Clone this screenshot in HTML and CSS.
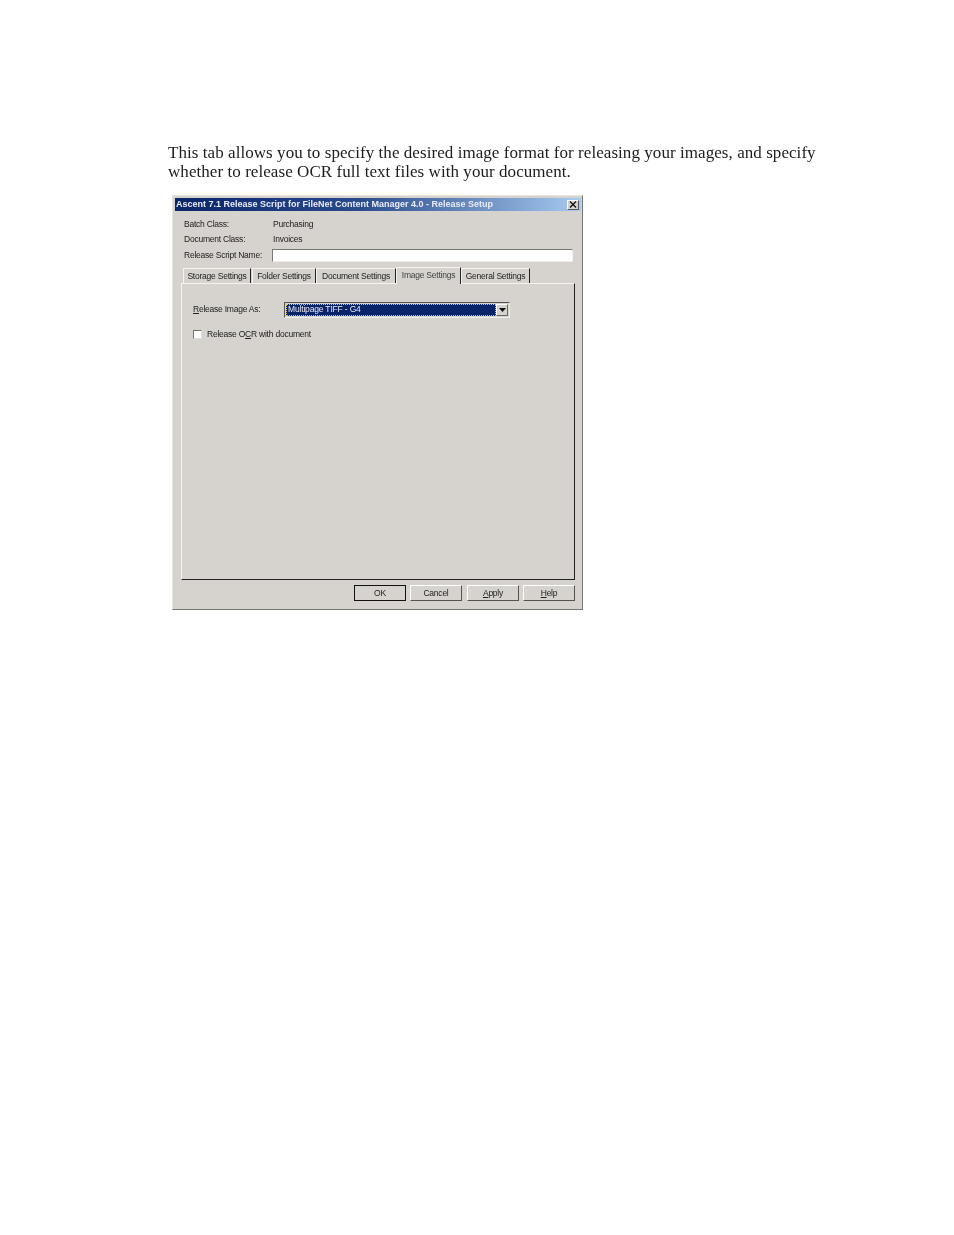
FILE: index.html
```html
<!DOCTYPE html>
<html lang="en">
<head>
<meta charset="utf-8">
<title>Release Setup</title>
<link rel="stylesheet" href="styles.css">
</head>
<body>
<main class="page">
  <p class="intro">This tab allows you to specify the desired image format for releasing your images, and specify<br>whether to release OCR full text files with your document.</p>
  <section class="dialog">
    <header class="titlebar">
      <span class="title">Ascent 7.1 Release Script for FileNet Content Manager 4.0 - Release Setup</span>
      <span class="close"><svg width="8" height="7" viewBox="0 0 8 7"><path d="M1 .5l6 6M7 .5l-6 6" stroke="#111" stroke-width="1.300" fill="none"/></svg></span>
    </header>
    <div class="info">
      <div class="row row-a"><span class="key">Batch Class:</span><span>Purchasing</span></div>
      <div class="row row-b"><span class="key">Document Class:</span><span>Invoices</span></div>
      <div class="row row-c"><span class="key key-field">Release Script Name:</span><span class="field"></span></div>
    </div>
    <nav class="tabs">
      <span class="tab t1">Storage Settings</span>
      <span class="tab t2">Folder Settings</span>
      <span class="tab t3">Document Settings</span>
      <span class="tab t4 active">Image Settings</span>
      <span class="tab t5">General Settings</span>
    </nav>
    <div class="panel">
      <div class="format">
        <label class="format-label"><u>R</u>elease Image As:</label>
        <div class="select">
          <span class="value"><span class="value-text">Multipage TIFF - G4</span></span>
          <span class="arrow"><svg width="7" height="4" viewBox="0 0 7 4"><path d="M0 0h7L3.500 4z" fill="#111"/></svg></span>
        </div>
      </div>
      <div class="check"><span class="box"></span><span>Release O<u>C</u>R with document</span></div>
    </div>
    <footer class="buttons">
      <span class="btn default">OK</span>
      <span class="btn">Cancel</span>
      <span class="btn btn-apply"><u>A</u>pply</span>
      <span class="btn"><u>H</u>elp</span>
    </footer>
  </section>
</main>
</body>
</html>
```
FILE: styles.css
```css
html, body { margin: 0; padding: 0; background: #fff; }
body { width: 954px; height: 1235px; overflow: hidden; }
.page { padding: 143px 0 0 168px; }
.intro {
  margin: 0;
  width: 700px;
  font: 17px/19px "Liberation Serif", serif;
  color: #1c1c1c;
  letter-spacing: 0.06px;
  filter: blur(0.2px);
}
.dialog {
  box-sizing: border-box;
  width: 411px;
  height: 415px;
  margin: 14px 0 0 4px;
  padding: 2px 1px 0 2px;
  background: #d6d3ce;
  border: 1px solid #77756f;
  border-top-color: #e8e6e1;
  border-left-color: #e8e6e1;
  font: 8.500px/11px "Liberation Sans", sans-serif;
  letter-spacing: -0.23px;
  color: #222;
  display: flex;
  flex-direction: column;
  filter: blur(0.3px);
}
.titlebar {
  height: 13px;
  flex: none;
  display: flex;
  align-items: center;
  justify-content: space-between;
  padding: 0 2px 0 1px;
  background: linear-gradient(90deg, #0a246a 0%, #2a4a8c 45%, #a6caf0 100%);
}
.title { color: #e8ecf4; font-weight: bold; font-size: 9px; letter-spacing: 0; white-space: nowrap; }
.close {
  box-sizing: border-box;
  width: 12px;
  height: 10px;
  display: flex;
  align-items: center;
  justify-content: center;
  background: #d6d3ce;
  border: 1px solid #555;
  border-top-color: #fff;
  border-left-color: #fff;
}
.info { padding: 6px 8px 0 9px; flex: none; }
.row { display: flex; align-items: center; }
.key { width: 89px; flex: none; }
.key-field { width: 88px; }
.row-a { height: 15px; }
.row-b { height: 15px; }
.row-c { height: 16px; }
.field {
  box-sizing: border-box;
  width: 301px;
  height: 13px;
  background: #fff;
  border: 1px solid #eee;
  border-top-color: #77756f;
  border-left-color: #77756f;
}
.tabs { display: flex; align-items: flex-end; height: 20px; flex: none; padding-left: 8px; }
.tab {
  box-sizing: border-box;
  height: 15px;
  padding-top: 2px;
  text-align: center;
  white-space: nowrap;
  border-top: 1px solid #f4f3f0;
  border-left: 1px solid #f4f3f0;
  border-right: 1px solid #222;
}
.t1 { width: 68px; }
.t2 { width: 64px; margin-left: 1px; }
.t3 { width: 80px; }
.t4 { width: 65px; }
.t5 { width: 69px; }
.active { height: 17px; padding-top: 2px; background: #d6d3ce; position: relative; z-index: 1; margin-bottom: -1px; color: #444; }
.panel {
  box-sizing: border-box;
  width: 394px;
  height: 297px;
  flex: none;
  margin-left: 6px;
  padding: 17px 0 0 11px;
  border: 1px solid #f4f3f0;
  border-right: 1.500px solid #222;
  border-bottom: 1.500px solid #222;
}
.format { display: flex; align-items: center; height: 17px; }
.format-label { width: 91px; flex: none; }
.select {
  box-sizing: border-box;
  width: 226px;
  height: 16px;
  display: flex;
  padding: 1px;
  border: 1px solid #555;
  border-right-color: #eee;
  border-bottom-color: #eee;
  background: #d6d3ce;
}
.value {
  flex: 1;
  background: #0a246a;
  outline: 1px dotted #d9c46c;
  outline-offset: -1px;
  display: flex;
  align-items: center;
  padding-left: 2px;
}
.value-text { color: #e6e8f2; letter-spacing: -0.17px; }
.arrow {
  box-sizing: border-box;
  width: 12px;
  flex: none;
  display: flex;
  align-items: center;
  justify-content: center;
  border: 1px solid #666;
  border-top-color: #fff;
  border-left-color: #fff;
}
.check { display: flex; align-items: center; height: 11px; margin-top: 11px; gap: 5px; }
.box {
  box-sizing: border-box;
  width: 9px;
  height: 9px;
  background: #fff;
  border: 1px solid #77756f;
  border-right-color: #ddd;
  border-bottom-color: #ddd;
}
.buttons { display: flex; justify-content: flex-end; gap: 4px; padding: 5px 6px 0 0; }
.btn {
  box-sizing: border-box;
  width: 52px;
  height: 16px;
  line-height: 14px;
  text-align: center;
  border: 1px solid #55534e;
  border-top-color: #fff;
  border-left-color: #fff;
}
.btn-apply { margin-left: 1px; }
.default { border: 1.500px solid #111; }
```
